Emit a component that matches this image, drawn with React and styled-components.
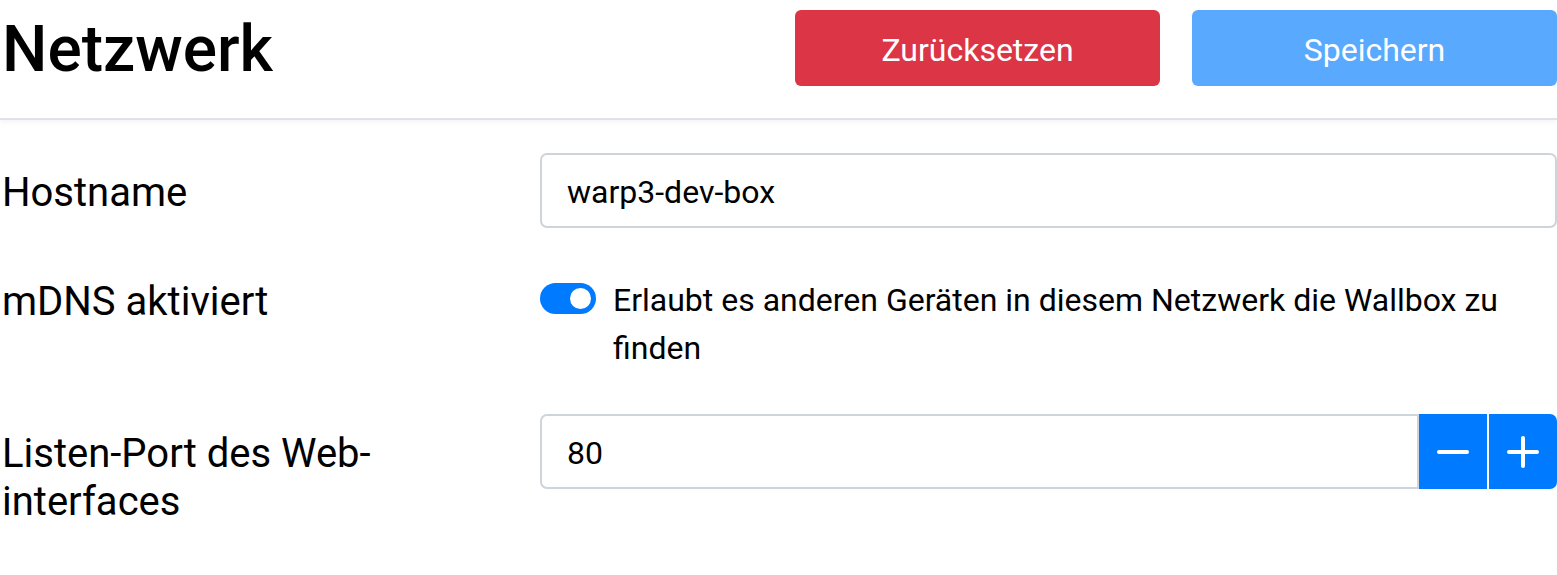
import styled, { createGlobalStyle } from "styled-components";

const GlobalStyle = createGlobalStyle`
    html, body {
        margin: 0;
        padding: 0;
        background: #fff;
    }
    body {
        font-family: Roboto, "Liberation Sans", sans-serif;
        color: #000;
    }
`;

function App() {
    return (
        <Page>
            <GlobalStyle />
            <Header>
                <Title>Netzwerk</Title>
                <ButtonWrap>
                    <ActionButton $color="#dc3545">Zurücksetzen</ActionButton>
                    <ActionButton $color="#59a9ff">Speichern</ActionButton>
                </ButtonWrap>
            </Header>
            <Form>
                <Row>
                    <Label>Hostname</Label>
                    <Input defaultValue="warp3-dev-box" />
                </Row>
                <Row>
                    <Label>mDNS aktiviert</Label>
                    <SwitchRow>
                        <Switch>
                            <Knob />
                        </Switch>
                        <SwitchText>
                            Erlaubt es anderen Geräten in diesem Netzwerk die Wallbox zu finden
                        </SwitchText>
                    </SwitchRow>
                </Row>
                <Row>
                    <Label>Listen-Port des Web-interfaces</Label>
                    <InputGroup>
                        <Input $group defaultValue="80" />
                        <StepButton>
                            <svg width="34" height="34" viewBox="0 0 34 34">
                                <path d="M3 17h28" stroke="#fff" strokeWidth="4" strokeLinecap="round" />
                            </svg>
                        </StepButton>
                        <StepButton $last>
                            <svg width="34" height="34" viewBox="0 0 34 34">
                                <path d="M3 17h28M17 3v28" stroke="#fff" strokeWidth="4" strokeLinecap="round" />
                            </svg>
                        </StepButton>
                    </InputGroup>
                </Row>
            </Form>
        </Page>
    );
}

const Page = styled.div`
    width: 1557px;
`;

const Header = styled.div`
    height: 120px;
    box-sizing: border-box;
    padding: 10px 0 32px;
    display: flex;
    align-items: center;
    justify-content: space-between;
    border-bottom: 2px solid #dfe3e7;
    box-shadow: 0 3px 4px rgba(0, 0, 0, 0.04);
`;

const Title = styled.h1`
    margin: 0;
    padding: 3px 0 0 2px;
    font-size: 64px;
    font-weight: 500;
    line-height: 76px;
`;

const ButtonWrap = styled.div`
    display: flex;
    gap: 32px;
`;

const ActionButton = styled.div`
    width: 365px;
    height: 76px;
    box-sizing: border-box;
    padding-top: 3px;
    border-radius: 6px;
    background-color: ${(p) => p.$color};
    color: #fff;
    font-size: 32px;
    display: flex;
    align-items: center;
    justify-content: center;
`;

const Form = styled.div`
    padding-top: 33px;
    display: flex;
    flex-direction: column;
    gap: 34px;
`;

const Row = styled.div`
    display: grid;
    grid-template-columns: 540px 1fr;
    align-items: start;
`;

const Label = styled.div`
    font-size: 40px;
    line-height: 48px;
    width: 500px;
    padding: 16px 0 0 2px;
`;

const Input = styled.input`
    box-sizing: border-box;
    width: 100%;
    height: 75px;
    padding: 3px 25px 0;
    border: 2px solid #ced4da;
    border-radius: ${(p) => (p.$group ? "7px 0 0 7px" : "7px")};
    font-family: Roboto, "Liberation Sans", sans-serif;
    font-size: 32px;
    color: #000;
    outline: none;
    flex: 1;
`;

const SwitchRow = styled.div`
    display: flex;
    align-items: flex-start;
    gap: 17px;
    padding: 14px 0 8px;
`;

const Switch = styled.div`
    flex: none;
    width: 56px;
    height: 31px;
    margin-top: 7px;
    border-radius: 16px;
    background: #007bff;
    display: flex;
    align-items: center;
    justify-content: flex-end;
    padding: 0 5px;
    box-sizing: border-box;
`;

const Knob = styled.div`
    width: 21px;
    height: 21px;
    border-radius: 50%;
    background: #fff;
`;

const SwitchText = styled.div`
    font-size: 32px;
    line-height: 48px;
`;

const InputGroup = styled.div`
    display: flex;
    gap: 2px;
    height: 75px;
`;

const StepButton = styled.div`
    flex: none;
    width: 68px;
    background: #007bff;
    border-radius: ${(p) => (p.$last ? "0 7px 7px 0" : "0")};
    display: flex;
    align-items: center;
    justify-content: center;
    margin-left: ${(p) => (p.$last ? "0" : "-2px")};
`;

export default App;
